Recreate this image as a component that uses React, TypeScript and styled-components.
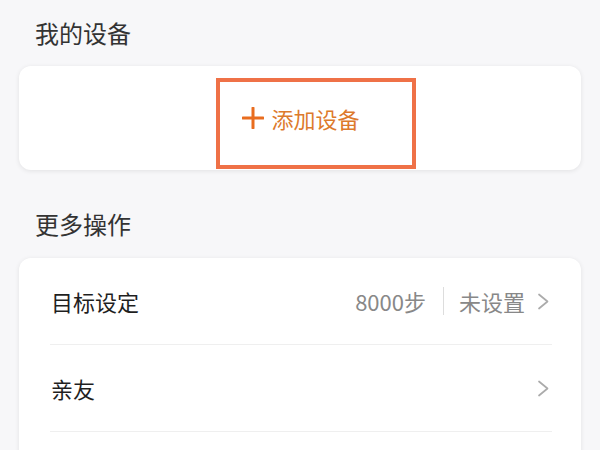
import React from "react";
import styled, { createGlobalStyle } from "styled-components";

const GlobalStyle = createGlobalStyle`
  html, body {
    margin: 0;
    padding: 0;
    background: #f7f7f9;
  }
  body {
    font-family: "Noto Sans CJK SC", "Noto Sans", sans-serif;
    -webkit-font-smoothing: antialiased;
  }
`;

const Page = styled.div`
  width: 600px;
  height: 450px;
  overflow: hidden;
  box-sizing: border-box;
  padding: 17px 19px 0 19px;
  display: flex;
  flex-direction: column;
  & > * {
    flex-shrink: 0;
  }
`;

const SectionTitle = styled.div<{ $top?: number }>`
  margin-top: ${(p) => p.$top ?? 0}px;
  padding-left: 16px;
  font-size: 24px;
  line-height: 32px;
  height: 32px;
  color: #333333;
  margin-bottom: 17px;
`;

const Card = styled.div`
  position: relative;
  background: #ffffff;
  border-radius: 12px;
  box-shadow: 0 1px 5px rgba(0, 0, 0, 0.09);
`;

const AddCard = styled(Card)`
  height: 104px;
  display: flex;
  align-items: center;
  justify-content: center;
`;

const AddButton = styled.div`
  display: flex;
  align-items: center;
  gap: 7px;
  color: #dd7a2c;
  font-size: 22px;
  line-height: 30px;
  margin-left: 2px;
`;

const Highlight = styled.div`
  position: absolute;
  left: 197px;
  top: 12px;
  width: 200px;
  height: 91px;
  box-sizing: border-box;
  border: 4px solid #ef7147;
  pointer-events: none;
`;

const ListCard = styled(Card)`
  margin-top: 1px;
  padding: 0 29px 0 31px;
`;

const Row = styled.div`
  height: 86px;
  display: flex;
  align-items: center;
  border-bottom: 1px solid #efefef;
`;

const RowTitle = styled.div`
  flex: 1;
  font-size: 22px;
  line-height: 30px;
  color: #1f1f1f;
  padding-left: 1px;
`;

const RowValue = styled.div`
  font-size: 22px;
  line-height: 30px;
  color: #888888;
`;

const Separator = styled.div`
  width: 1px;
  height: 28px;
  background: #dddddd;
  margin: 0 15px 0 17px;
`;

const Chevron = styled.svg`
  margin-left: 12px;
  margin-right: 2px;
  flex: none;
`;

const ChevronIcon = () => (
  <Chevron width="13" height="17" viewBox="0 0 13 17">
    <path d="M2 1.5 L10.5 8.5 L2 15.5" fill="none" stroke="#ababab" strokeWidth="1.7" strokeLinecap="round" strokeLinejoin="round" />
  </Chevron>
);

const PlusIcon = () => (
  <svg width="22" height="22" viewBox="0 0 22 22">
    <path d="M11 1 V21 M1 11 H21" stroke="#e96d1f" strokeWidth="3" strokeLinecap="round" />
  </svg>
);

export default function App() {
  return (
    <>
      <GlobalStyle />
      <Page>
        <SectionTitle>我的设备</SectionTitle>
        <AddCard>
          <AddButton>
            <PlusIcon />
            <span>添加设备</span>
          </AddButton>
          <Highlight />
        </AddCard>
        <SectionTitle $top={38}>更多操作</SectionTitle>
        <ListCard>
          <Row>
            <RowTitle>目标设定</RowTitle>
            <RowValue>8000步</RowValue>
            <Separator />
            <RowValue>未设置</RowValue>
            <ChevronIcon />
          </Row>
          <Row>
            <RowTitle>亲友</RowTitle>
            <ChevronIcon />
          </Row>
          <Row />
        </ListCard>
      </Page>
    </>
  );
}
